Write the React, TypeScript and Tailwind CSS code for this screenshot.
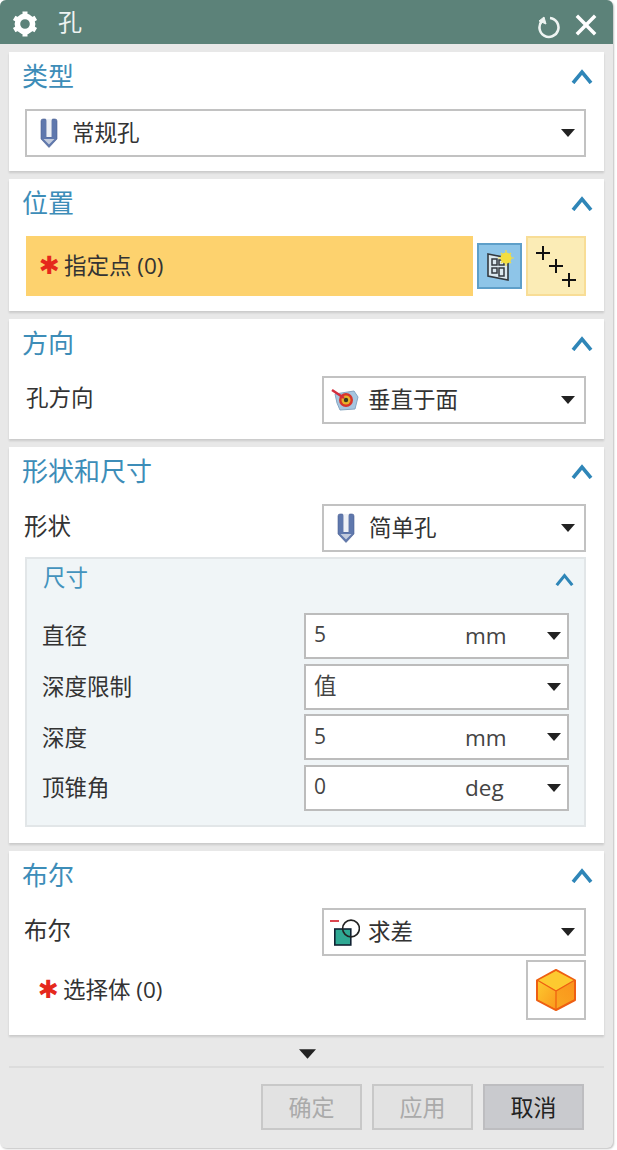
import { FC, ReactNode } from 'react'

const Chevron: FC<{ small?: boolean }> = ({ small }) => (
	<svg viewBox="0 0 22 15" className={small ? 'h-[13px] w-[19px]' : 'h-[15px] w-[22px]'} fill="none">
		<path d="M2 14 L11 3 L20 14" stroke="#2f86b8" strokeWidth="3.6" />
	</svg>
)

const Caret: FC<{ big?: boolean }> = ({ big }) => (
	<svg viewBox="0 0 14 8" className={big ? 'h-[10px] w-[17px]' : 'h-[8px] w-[14px]'}>
		<path d="M0 0 H14 L7 8 Z" fill="#222" />
	</svg>
)

const GearIcon: FC = () => (
	<svg viewBox="0 0 26 26" className="h-[26px] w-[26px]" fill="none" stroke="#fff">
		<circle cx="13" cy="13" r="7.6" strokeWidth="5.6" />
		<path d="M13 0.5 V5 M13 21 V25.5 M2.2 6.8 L6 9 M20 17 L23.8 19.2 M2.2 19.2 L6 17 M20 9 L23.8 6.8" strokeWidth="5" />
	</svg>
)

const HoleIcon: FC = () => (
	<svg viewBox="0 0 18 30" className="h-[30px] w-[18px]">
		<path d="M1 3 Q1 1 3 1 H5 Q6.5 1 6.5 3 V19 H11.5 V3 Q11.5 1 13 1 H15 Q17 1 17 3 V21 L9 29.5 L1 21 Z" fill="#5f78ad" stroke="#4b5f92" strokeWidth="0.6" />
		<path d="M6.5 1 V19 H11.5 V1 Z" fill="#eef1f6" />
		<path d="M3.5 21 L9 26.5 L14.5 21 Z" fill="#c2cbdd" />
	</svg>
)

const NormalIcon: FC = () => (
	<svg viewBox="0 0 28 24" className="h-[24px] w-[28px]">
		<path d="M4 6 L23 3 L27 9 L24 21 L9 22 L6 15 Z" fill="#a6c6e0" stroke="#85a5c2" />
		<circle cx="15" cy="12" r="7" fill="#d8352a" />
		<circle cx="15" cy="12" r="4.5" fill="#e6b32a" />
		<circle cx="15" cy="12" r="2.2" fill="#3a3a1e" />
		<path d="M1 2 L13 10" stroke="#d42c3c" strokeWidth="2.4" />
	</svg>
)

const SubtractIcon: FC = () => (
	<svg viewBox="0 0 30 27" className="h-[27px] w-[30px]">
		<path d="M0 2 H9" stroke="#d8303c" strokeWidth="1.8" />
		<rect x="4.8" y="10" width="16" height="16" fill="#2fa893" stroke="#123" strokeWidth="1.6" />
		<circle cx="21" cy="9.5" r="8.4" fill="none" stroke="#222" strokeWidth="1.6" />
	</svg>
)

const CubeIcon: FC = () => (
	<svg viewBox="0 0 42 44" className="h-[44px] w-[42px]">
		<defs>
			<linearGradient id="cubeLeft" x1="0" y1="0" x2="1" y2="1">
				<stop offset="0" stopColor="#fdc92f" />
				<stop offset="1" stopColor="#fb9a1c" />
			</linearGradient>
			<linearGradient id="cubeRight" x1="1" y1="0" x2="0" y2="1">
				<stop offset="0" stopColor="#fb8f1a" />
				<stop offset="1" stopColor="#f8b024" />
			</linearGradient>
		</defs>
		<path d="M21 2 L40 12.5 V32 L21 42 L2 32 V12.5 Z" fill="url(#cubeRight)" stroke="#ee5f12" strokeWidth="2" strokeLinejoin="round" />
		<path d="M21 3 L39 12.5 L21 22.5 L3 12.5 Z" fill="#fdca30" />
		<path d="M3 13 L21 23 V41 L3 31.5 Z" fill="url(#cubeLeft)" />
		<path d="M21 23 V41.5 M3 12.5 L21 23 L39 12.5" stroke="#ee5f12" strokeWidth="1.2" fill="none" />
	</svg>
)

const SketchPointIcon: FC = () => (
	<svg viewBox="0 0 28 32" className="h-[32px] w-[28px]" fill="none">
		<path d="M2 4 L22 8 V30 L2 26 Z" stroke="#33393f" strokeWidth="1.6" fill="#dce8ee" />
		<path d="M6 9 H11 V15 H6 Z M13 10 H18 V15 H13 Z M6 18 H11 V23 H6 Z M13 18 H18 V26 H13 Z" stroke="#33393f" strokeWidth="1.5" />
		<circle cx="20" cy="8" r="5.5" fill="#f4de3e" />
		<path d="M20 0 V16 M12 8 H28 M15 3 L25 13 M25 3 L15 13" stroke="#f4de3e" strokeWidth="1.2" />
	</svg>
)

const PointsIcon: FC = () => (
	<svg viewBox="0 0 56 56" className="h-[56px] w-[56px]" fill="none" stroke="#111" strokeWidth="2">
		<path d="M8 15 H22 M15 8 V22 M21 28 H35 M28 21 V35 M34 42 H48 M41 35 V49" />
	</svg>
)

const Combo: FC<{ icon?: ReactNode; label: string; className: string }> = ({ icon, label, className }) => (
	<div className={`flex h-[48px] items-center border-2 border-[#c2c2c2] bg-white text-[22.5px] text-[#333] ${className}`}>
		{icon}
		<span className="pb-[1px]">{label}</span>
		<span className="ml-auto mr-[9px] flex">
			<Caret />
		</span>
	</div>
)

const Panel: FC<{ title: string; className: string; children: ReactNode }> = ({ title, className, children }) => (
	<section className={`bg-white pl-[16px] pr-[18px] shadow-[0_2px_2px_rgba(0,0,0,0.13)] ${className}`}>
		<div className="-ml-[3px] -mr-[7px] flex h-[50px] items-center justify-between">
			<h2 className="pb-[1px] text-[26px] font-normal text-[#3d8db8]">{title}</h2>
			<span className="-mt-[1px] -ml-[1px] flex">
				<Chevron />
			</span>
		</div>
		{children}
	</section>
)

const ValueRow: FC<{ label: string; value: string; unit?: string }> = ({ label, value, unit }) => (
	<div className="flex h-[46px] items-center">
		<span className="text-[22.5px] text-[#333]">{label}</span>
		<div className="ml-auto flex h-full w-[265px] items-center border-2 border-[#bcbcbc] bg-white pl-[8px] text-[#444]">
			<span className={unit ? 'pb-[2px] text-[21px]' : 'pb-[2px] text-[22.5px]'}>{value}</span>
			{unit && <span className="ml-auto w-[44px] text-[22.5px] text-[#444]">{unit}</span>}
			<span className={`${unit ? 'ml-[38px]' : 'ml-auto'} mr-[6px] flex`}>
				<Caret />
			</span>
		</div>
	</div>
)

const RequiredLabel: FC<{ text: string }> = ({ text }) => (
	<>
		<span className="w-[15px] pb-[2px] text-center font-['DejaVu_Sans'] text-[25px] leading-none text-[#e5281c]">✱</span>
		<span className="ml-[10px]">{text}</span>
	</>
)

const FooterButton: FC<{ label: string; active?: boolean }> = ({ label, active }) => (
	<button
		className={`flex h-[46px] w-[101px] items-center justify-center border-2 text-[23px] ${
			active ? 'border-[#bdbdc0] bg-[#c9cace] text-[#222]' : 'border-[#c8c8c8] bg-[#e2e2e2] text-[#aaa]'
		}`}
	>
		{label}
	</button>
)

export default function App() {
	return (
		<div className="h-[1150px] w-[617px] bg-white [font-family:'Open_Sans','Noto_Sans_CJK_SC',sans-serif]">
			<div className="flex h-[1148px] w-[613px] flex-col overflow-hidden rounded-[6px] bg-[#e8e8e8] shadow-[1px_1px_2px_rgba(0,0,0,0.25)]">
				<header className="flex h-[44px] shrink-0 items-center bg-[#5c8279] pl-[12px] pr-[16px] text-white">
					<span className="mt-[3px] flex">
						<GearIcon />
					</span>
					<span className="ml-[20px] text-[24px] text-[#eef3f2]">孔</span>
					<svg viewBox="0 0 26 26" className="ml-auto mt-[8px] h-[26px] w-[26px]" fill="none" stroke="#eef4f2" strokeWidth="2.6">
						<path d="M6 8 A9.5 9.5 0 1 0 14 5" />
						<path d="M3 8 L10 11 L8 4 Z" fill="#eef4f2" strokeWidth="1" />
					</svg>
					<svg viewBox="0 0 24 24" className="ml-[13px] mt-[5px] h-[22px] w-[22px]" fill="none" stroke="#fff" strokeWidth="3.8">
						<path d="M2 2 L22 22 M22 2 L2 22" />
					</svg>
				</header>

				<div className="ml-[9px] mt-[8px] flex w-[595px] flex-col gap-[8px]">
					<Panel title="类型" className="h-[119px]">
						<div className="mt-[7px]">
							<Combo
								label="常规孔"
								className="pl-[13px]"
								icon={
									<span className="mr-[14px] flex">
										<HoleIcon />
									</span>
								}
							/>
						</div>
					</Panel>

					<Panel title="位置" className="h-[132px]">
						<div className="mt-[7px] flex items-center">
							<div className="ml-[1px] flex h-[60px] w-[447px] items-center bg-[#fdd26e] pl-[13px] text-[22.5px] text-[#333]">
								<RequiredLabel text="指定点 (0)" />
							</div>
							<div className="ml-[4px] flex h-[46px] w-[45px] items-center justify-center border-2 border-[#5e9fc9] bg-[#8ec5e8]">
								<SketchPointIcon />
							</div>
							<div className="ml-auto flex h-[60px] w-[60px] items-center justify-center border-2 border-[#f8dd96] bg-[#fbecb6]">
								<PointsIcon />
							</div>
						</div>
					</Panel>

					<Panel title="方向" className="h-[120px]">
						<div className="mt-[7px] flex items-center justify-between">
							<span className="ml-[1px] pb-[4px] text-[22.5px] text-[#333]">孔方向</span>
							<Combo
								label="垂直于面"
								className="w-[264px] pl-[7px]"
								icon={
									<span className="mr-[9px] flex">
										<NormalIcon />
									</span>
								}
							/>
						</div>
					</Panel>

					<Panel title="形状和尺寸" className="h-[396px]">
						<div className="mt-[7px] flex items-center justify-between">
							<span className="-ml-[1px] pb-[3px] text-[23.5px] text-[#333]">形状</span>
							<Combo
								label="简单孔"
								className="w-[264px] pl-[13px]"
								icon={
									<span className="mr-[14px] flex">
										<HoleIcon />
									</span>
								}
							/>
						</div>
						<div className="mt-[5px] h-[270px] border-2 border-[#e2e6e8] bg-[#f0f5f7] pl-[15px] pr-[15px]">
							<div className="-mr-[5px] flex h-[40px] items-center justify-between">
								<span className="pb-[2px] pl-[1px] text-[22.5px] text-[#4393bd]">尺寸</span>
								<Chevron small />
							</div>
							<div className="mt-[14px] flex flex-col gap-[4.7px]">
								<ValueRow label="直径" value="5" unit="mm" />
								<ValueRow label="深度限制" value="值" />
								<ValueRow label="深度" value="5" unit="mm" />
								<ValueRow label="顶锥角" value="0" unit="deg" />
							</div>
						</div>
					</Panel>

					<Panel title="布尔" className="h-[184px]">
						<div className="mt-[7px] flex items-center justify-between">
							<span className="-ml-[1px] pb-[2px] text-[23.5px] text-[#333]">布尔</span>
							<Combo
								label="求差"
								className="w-[264px] pl-[6px]"
								icon={
									<span className="mr-[8px] flex">
										<SubtractIcon />
									</span>
								}
							/>
						</div>
						<div className="mt-[4px] flex items-center">
							<div className="ml-[13px] flex items-center text-[22.5px] text-[#333]">
								<RequiredLabel text="选择体 (0)" />
							</div>
							<div className="ml-auto flex h-[60px] w-[60px] items-center justify-center border-2 border-[#c2c2c2] bg-white">
								<CubeIcon />
							</div>
						</div>
					</Panel>
				</div>

				<div className="ml-[9px] w-[595px]">
					<div className="flex h-[33px] items-center justify-center border-b-2 border-[#dcdcdc] pl-[1px] pt-[6px]">
						<Caret big />
					</div>
					<div className="mt-[16px] flex justify-end gap-[10px] pr-[20px]">
						<FooterButton label="确定" />
						<FooterButton label="应用" />
						<FooterButton label="取消" active />
					</div>
				</div>
			</div>
		</div>
	)
}
